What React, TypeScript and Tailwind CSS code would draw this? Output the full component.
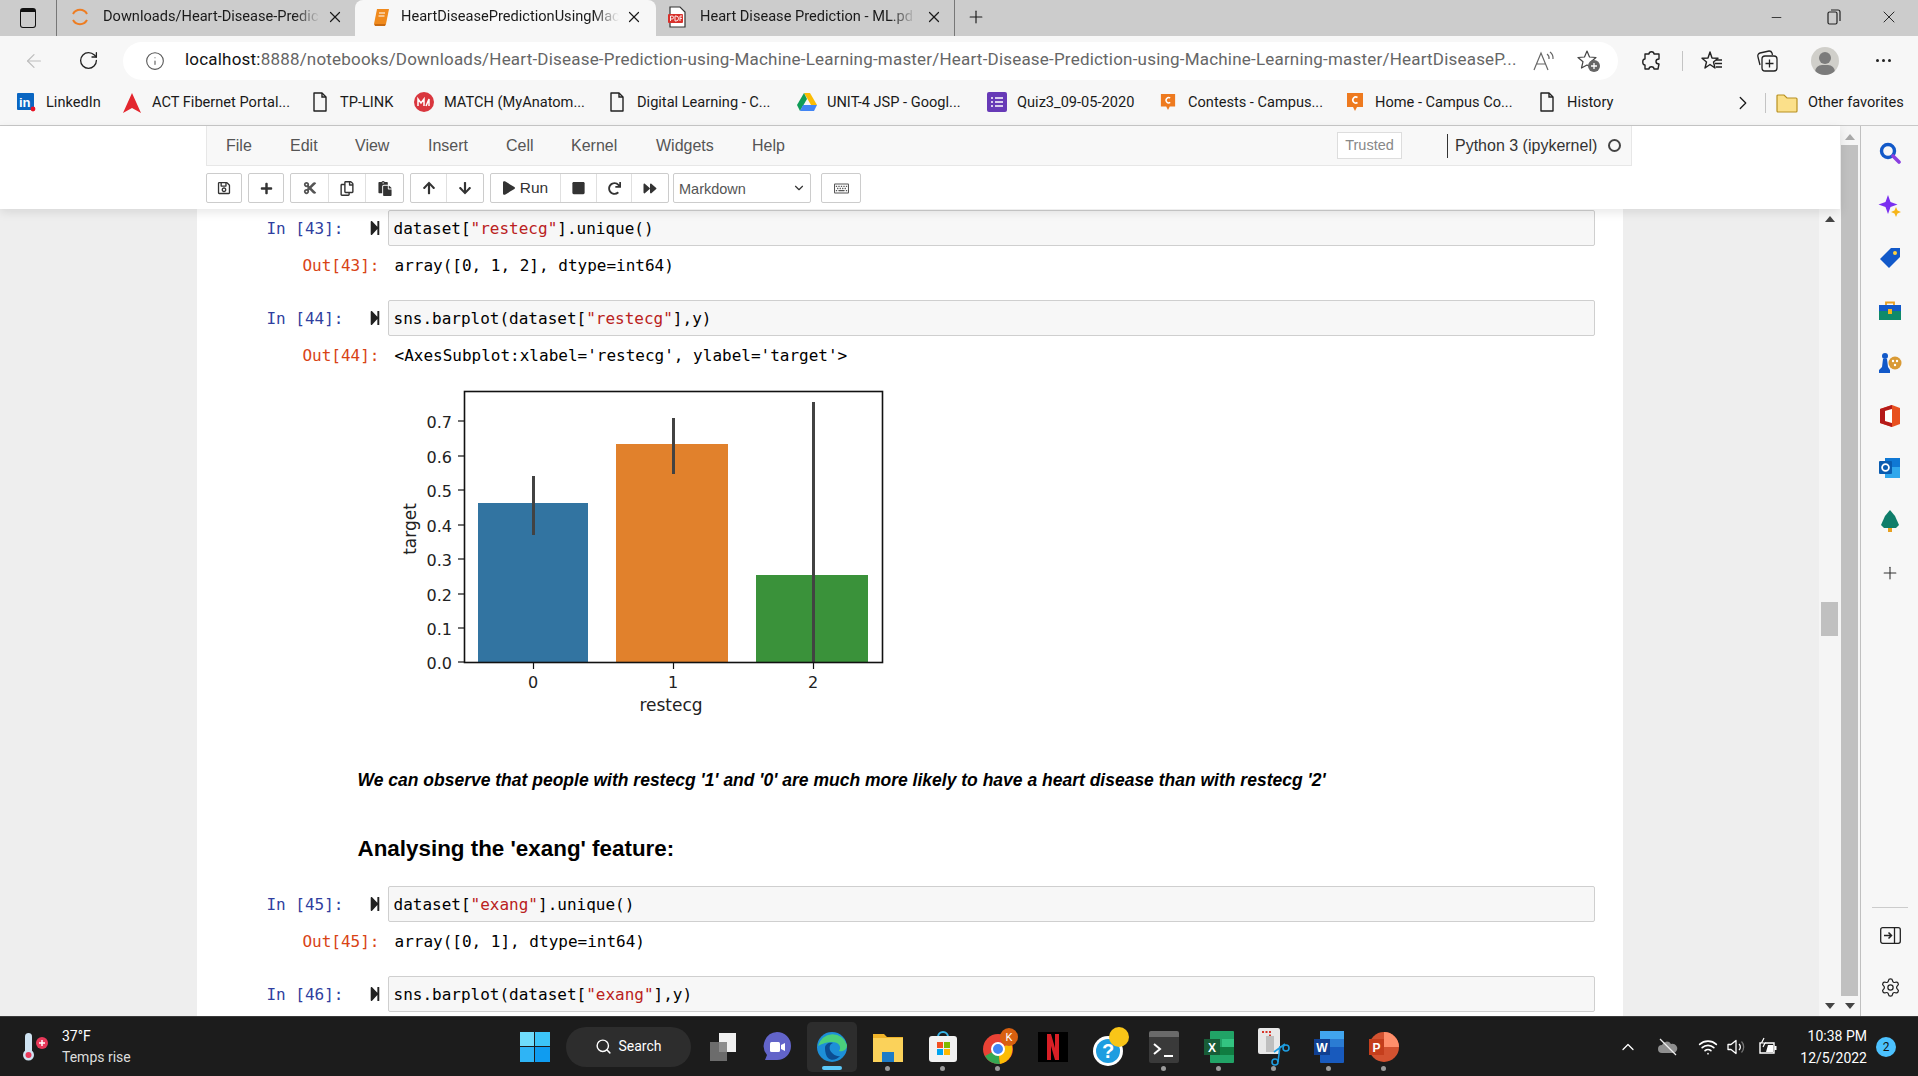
import type { ReactNode } from "react";
import {
	FaArrowDown,
	FaArrowUp,
	FaCut,
	FaForward,
	FaPaste,
	FaPlay,
	FaPlus,
	FaRedo,
	FaRegCopy,
	FaRegKeyboard,
	FaRegSave,
	FaStepForward,
	FaStop,
} from "react-icons/fa";
import {
	ArrowLeft,
	ChevronDown,
	ChevronRight,
	ChevronUp,
	Info,
	Plus,
	RotateCw,
	Search,
	Settings,
	X,
	Minus,
	Wifi,
} from "lucide-react";

const UI = "font-['Roboto','Liberation_Sans',sans-serif]";
const NB = "font-['Liberation_Sans',Arial,sans-serif]";
const MONO = "font-['DejaVu_Sans_Mono',monospace]";

function DocIcon() {
	return (
		<svg width="16" height="20" viewBox="0 0 16 20" fill="none" stroke="#222" strokeWidth="1.4">
			<path d="M2 1h8l4 4v14H2z" strokeLinejoin="round" />
			<path d="M10 1v4h4" />
		</svg>
	);
}

function JupyterSpinner() {
	return (
		<svg width="20" height="22" viewBox="0 0 20 22" fill="none" stroke="#ee7d22" strokeWidth="2">
			<path d="M3 8a8 8 0 0 1 14 0" />
			<path d="M3 14a8 8 0 0 0 14 0" />
		</svg>
	);
}

function NotebookIcon() {
	return (
		<svg width="18" height="20" viewBox="0 0 18 20">
			<path d="M5 2h12l-3 15H2z" fill="#f08a1d" />
			<path d="M2 17l1 2h10l1-2z" fill="#c96a10" />
			<path d="M7 6h6M6.5 9h6" stroke="#fff" strokeWidth="1.2" />
		</svg>
	);
}

function PdfIcon() {
	return (
		<svg width="20" height="22" viewBox="0 0 20 22">
			<path d="M3 1h10l5 5v15H3z" fill="#fff" stroke="#333" strokeWidth="1.2" />
			<rect x="1" y="8" width="15" height="9" rx="1" fill="#d8312c" />
			<path d="M3.5 15v-5h1.6a1.3 1.3 0 0 1 0 3H3.5M8 10v5h1a2 2 0 0 0 0-5zM13 15v-5h2.2M13 12.4h2" stroke="#fff" strokeWidth=".9" fill="none" />
		</svg>
	);
}

function CampusIcon({ size = 18 }: { size?: number }) {
	return (
		<svg width={size} height={size + 2} viewBox="0 0 18 20">
			<path d="M1 1h16v14h-6l-2 4-2-4H1z" fill="#ee7a1f" />
			<path d="M11.5 5.5a3 3 0 1 0 0 5" stroke="#fff" strokeWidth="1.6" fill="none" />
		</svg>
	);
}

const bookmarks: { label: string; icon: ReactNode; width: string }[] = [
	{
		label: "LinkedIn",
		width: "w-[106px]",
		icon: (
			<svg width="20" height="20" viewBox="0 0 20 20">
				<rect x="1" y="1" width="17" height="17" rx="1" fill="#0a66c2" />
				<text x="3" y="15" fill="#fff" fontSize="13" fontWeight="700" fontFamily="Liberation Sans">in</text>
				<circle cx="17" cy="17" r="2.4" fill="#e81123" />
			</svg>
		),
	},
	{
		label: "ACT Fibernet Portal...",
		width: "w-[188px]",
		icon: (
			<svg width="20" height="22" viewBox="0 0 20 22">
				<path d="M10 1l9 20-9-5-9 5z" fill="#e3262e" />
			</svg>
		),
	},
	{ label: "TP-LINK", width: "w-[104px]", icon: <DocIcon /> },
	{
		label: "MATCH (MyAnatom...",
		width: "w-[193px]",
		icon: (
			<svg width="20" height="20" viewBox="0 0 20 20">
				<circle cx="10" cy="10" r="10" fill="#d9363e" />
				<path d="M4 14V7l3 4 3-4v7M12 14l3-7v7" fill="none" stroke="#fff" strokeWidth="1.5" />
			</svg>
		),
	},
	{ label: "Digital Learning - C...", width: "w-[190px]", icon: <DocIcon /> },
	{
		label: "UNIT-4 JSP - Googl...",
		width: "w-[190px]",
		icon: (
			<svg width="20" height="18" viewBox="0 0 20 18">
				<path d="M7 0h6l7 12h-6z" fill="#fbbc04" />
				<path d="M7 0l-7 12 3 6 7-12z" fill="#0f9d58" />
				<path d="M3 18h14l3-6H6z" fill="#4285f4" />
			</svg>
		),
	},
	{
		label: "Quiz3_09-05-2020",
		width: "w-[171px]",
		icon: (
			<svg width="20" height="20" viewBox="0 0 20 20">
				<rect width="20" height="20" rx="2" fill="#673ab7" />
				<path d="M4 6h2M8 6h8M4 10h2M8 10h8M4 14h2M8 14h8" stroke="#fff" strokeWidth="1.6" />
			</svg>
		),
	},
	{ label: "Contests - Campus...", width: "w-[187px]", icon: <CampusIcon size={16} /> },
	{ label: "Home - Campus Co...", width: "w-[192px]", icon: <CampusIcon /> },
	{ label: "History", width: "w-[185px]", icon: <DocIcon /> },
];

const menus = [
	{ label: "File", width: "w-[64px]" },
	{ label: "Edit", width: "w-[65px]" },
	{ label: "View", width: "w-[73px]" },
	{ label: "Insert", width: "w-[78px]" },
	{ label: "Cell", width: "w-[65px]" },
	{ label: "Kernel", width: "w-[85px]" },
	{ label: "Widgets", width: "w-[96px]" },
	{ label: "Help", width: "w-[60px]" },
];

function ToolGroup({ children }: { children: ReactNode }) {
	return <div className="flex h-[30px] rounded-[2px] border border-[#ccc] bg-white divide-x divide-[#e0e0e0] text-[#333] shrink-0">{children}</div>;
}

function ToolBtn({ className, children }: { className: string; children: ReactNode }) {
	return <div className={`flex items-center justify-center ${className}`}>{children}</div>;
}

function CodeCell({ n, children }: { n: number; children: ReactNode }) {
	return (
		<div className={`flex h-[36px] ${MONO} text-[16px]`}>
			<div className="w-[147px] text-right leading-[37px] text-[#303f9f]">In&nbsp;[{n}]:</div>
			<div className="w-[44px] flex items-center pl-[25px] text-[#222]">
				<FaStepForward className="w-[12px] h-[16px]" preserveAspectRatio="none" />
			</div>
			<div className="w-[1207px] rounded-[2px] border border-[#cfcfcf] bg-[#f7f7f7] pl-[5px] leading-[35px] text-black whitespace-pre">
				{children}
			</div>
		</div>
	);
}

function OutRow({ n, children, className }: { n: number; children: ReactNode; className?: string }) {
	return (
		<div className={`flex h-[30px] mt-[4px] ${MONO} text-[16px] leading-[32px] ${className ?? ""}`}>
			<div className="w-[183px] text-right text-[#d84315]">Out[{n}]:</div>
			<div className="pl-[15px] text-black whitespace-pre">{children}</div>
		</div>
	);
}

function Str({ children }: { children: ReactNode }) {
	return <span className="text-[#ba2121]">{children}</span>;
}

function BarChart() {
	const ticks = [
		["0.7", 421],
		["0.6", 456],
		["0.5", 490],
		["0.4", 525],
		["0.3", 559],
		["0.2", 594],
		["0.1", 628],
		["0.0", 662],
	] as const;
	return (
		<svg className="block ml-[190px] w-[520px] h-[360px]" viewBox="387 370 520 360" fontFamily="DejaVu Sans" fill="#222">
			<rect x="478" y="503" width="110" height="159" fill="#3274a1" />
			<rect x="616" y="444" width="112" height="218" fill="#e1812c" />
			<rect x="756" y="575" width="112" height="87" fill="#3a923a" />
			<path d="M533.5 476v59M673.5 418v56M813.5 402v260" stroke="#424242" strokeWidth="3" />
			<rect x="464.5" y="391.5" width="418" height="271" fill="none" stroke="#111" strokeWidth="1.6" />
			{ticks.map(([label, y]) => (
				<g key={label}>
					<path d={`M458 ${y}h7`} stroke="#111" strokeWidth="1.2" />
					<text x="452" y={y + 7} textAnchor="end" fontSize="16">{label}</text>
				</g>
			))}
			{[
				["0", 533.5],
				["1", 673.5],
				["2", 813.5],
			].map(([label, x]) => (
				<g key={label}>
					<path d={`M${x} 662v7`} stroke="#111" strokeWidth="1.2" />
					<text x={Number(x) - 0.5} y="688" textAnchor="middle" fontSize="16">{label}</text>
				</g>
			))}
			<text x="671" y="711" textAnchor="middle" fontSize="17">restecg</text>
			<text transform="translate(416 529) rotate(-90)" textAnchor="middle" fontSize="17">target</text>
		</svg>
	);
}

function SideIcon({ children }: { children: ReactNode }) {
	return <div className="h-[52.5px] flex items-center justify-center">{children}</div>;
}

function Sidebar() {
	return (
		<div className="w-[57px] shrink-0 bg-[#f7f7f7] flex flex-col pl-[1px] pt-[1px]">
			<SideIcon>
				<svg width="22" height="22" viewBox="0 0 22 22" fill="none">
					<circle cx="9" cy="9" r="6.5" stroke="#1259c9" strokeWidth="3.4" />
					<path d="M14 14l6 6" stroke="#8a3fe0" strokeWidth="3.6" strokeLinecap="round" />
				</svg>
			</SideIcon>
			<SideIcon>
				<svg width="24" height="24" viewBox="0 0 24 24">
					<path d="M10 1l2.5 7 7 2.5-7 2.5L10 20l-2.5-7L.5 10.500l7-2.500z" fill="#7a2ff0" />
					<path d="M18 13l1.500 3.500L23 18l-3.500 1.500L18 23l-1.500-3.500L13 18l3.500-1.500z" fill="#f6b519" />
				</svg>
			</SideIcon>
			<SideIcon>
				<svg width="22" height="22" viewBox="0 0 22 22">
					<path d="M12 1h9v9L10 21 1 12z" fill="#1259c9" />
					<circle cx="16" cy="6" r="2" fill="#ffd23f" />
				</svg>
			</SideIcon>
			<SideIcon>
				<svg width="22" height="20" viewBox="0 0 22 20">
					<path d="M7 5V1.500h8V5" fill="none" stroke="#e8a020" strokeWidth="1.8" />
					<rect y="4" width="22" height="6" fill="#1259c9" />
					<rect y="10" width="22" height="9" fill="#0f8a6a" />
					<rect x="9" y="8" width="4" height="5" fill="#f6b519" />
				</svg>
			</SideIcon>
			<SideIcon>
				<svg width="24" height="22" viewBox="0 0 24 22">
					<circle cx="17" cy="11" r="6.500" fill="#d99a35" />
					<circle cx="15" cy="9" r="1.200" fill="#fff" />
					<circle cx="19" cy="9" r="1.200" fill="#fff" />
					<circle cx="17" cy="13" r="1.200" fill="#fff" />
					<circle cx="7" cy="4" r="3" fill="#1259c9" />
					<path d="M5 7h4l1 8 2 3v3H1v-3l3-3z" fill="#1259c9" />
				</svg>
			</SideIcon>
			<SideIcon>
				<svg width="22" height="24" viewBox="0 0 22 24">
					<path d="M1 5l12-4 8 3v16l-8 3-12-4z" fill="#e8501f" />
					<path d="M1 5l12-4v4L6 7v10l7 2v4L1 19z" fill="#b51a1a" />
					<path d="M6 7l7-2v14l-7-2z" fill="#fff" />
				</svg>
			</SideIcon>
			<SideIcon>
				<svg width="22" height="22" viewBox="0 0 22 22">
					<rect x="6" y="1" width="15" height="18" fill="#0f78d4" />
					<path d="M6 10l15 0v11H6z" fill="#30a7ec" />
					<rect y="4" width="13" height="13" rx="1" fill="#0a5cb0" />
					<circle cx="6.500" cy="10.500" r="3.400" fill="none" stroke="#fff" strokeWidth="1.800" />
				</svg>
			</SideIcon>
			<SideIcon>
				<svg width="20" height="22" viewBox="0 0 20 22">
					<rect x="8" y="16" width="4" height="6" fill="#e8a020" />
					<path d="M10 0l5 6 4 9-3 3H4l-3-3 4-9z" fill="#0f7d6a" />
				</svg>
			</SideIcon>
			<SideIcon>
				<Plus className="w-[20px] h-[20px] text-[#333]" strokeWidth={1.3} />
			</SideIcon>
			<div className="mt-auto mx-[10px] border-t border-[#ccc]" />
			<div className="h-[54px] flex items-center justify-center">
				<svg width="21" height="17" viewBox="0 0 21 17" fill="none" stroke="#222" strokeWidth="1.3">
					<rect x=".7" y=".7" width="19.600" height="15.600" rx="2" />
					<path d="M14.500 .7v15.600" />
					<path d="M4 8.500h7M8.500 5.500l3 3-3 3" strokeWidth="1.500" />
				</svg>
			</div>
			<div className="h-[54px] flex items-start pt-[15px] justify-center">
				<Settings className="w-[21px] h-[21px] text-[#222]" strokeWidth={1.4} />
			</div>
		</div>
	);
}

function TaskIcon({ dot, className, children }: { dot?: boolean; className: string; children: ReactNode }) {
	return (
		<div className={`relative h-[60px] flex items-center justify-center shrink-0 ${className}`}>
			{children}
			{dot && <span className="absolute bottom-[6px] left-1/2 -ml-[2.5px] w-[5px] h-[5px] rounded-full bg-[#9a9a9a]" />}
		</div>
	);
}

function Taskbar() {
	return (
		<div className={`h-[60px] shrink-0 bg-[#1c1c1c] border-t border-[#3a3a3a] flex items-center text-white ${UI} relative`}>
			<div className="w-[520px] shrink-0 flex items-center pl-[22px]">
				<svg width="28" height="30" viewBox="0 0 28 30" className="mr-[12px]">
					<rect x="3" y="1" width="7" height="22" rx="3.500" fill="#cfe3f2" />
					<circle cx="6.500" cy="23" r="5.500" fill="#cfe3f2" />
					<circle cx="6.500" cy="23" r="3" fill="#e8395a" />
					<circle cx="20" cy="11" r="6" fill="#e8395a" />
					<path d="M17 11h6M20 8v6" stroke="#fff" strokeWidth="1.500" />
				</svg>
				<div className="text-[14px] leading-[21px]">
					<div>37°F</div>
					<div className="text-[#dcdcdc]">Temps rise</div>
				</div>
			</div>
			<svg width="30" height="30" viewBox="0 0 30 30" className="shrink-0">
				<rect width="14" height="14" fill="#6fdcfb" />
				<rect x="15" width="15" height="14" fill="#3cc4f7" />
				<rect y="15" width="14" height="15" fill="#2fb4f5" />
				<rect x="15" y="15" width="15" height="15" fill="#0f9cf0" />
			</svg>
			<div className="ml-[16px] w-[125px] h-[40px] rounded-full bg-[#2d2d2d] flex items-center justify-center gap-[6px] text-[14px] shrink-0">
				<Search className="w-[17px] h-[17px]" strokeWidth={2} />
				Search
			</div>
			<TaskIcon className="w-[63px]">
				<svg width="28" height="30" viewBox="0 0 28 30">
					<rect x="10" y="1" width="17" height="19" fill="#f0f0f0" />
					<rect x="1" y="10" width="17" height="19" fill="#7a7a7a" fillOpacity=".85" />
				</svg>
			</TaskIcon>
			<TaskIcon className="w-[45px]">
				<svg width="30" height="32" viewBox="0 0 30 32">
					<path d="M15 1a14 14 0 0 1 0 28H3l2-5a14 14 0 0 1 10-23z" fill="#6264c9" />
					<rect x="8" y="11" width="10" height="10" rx="1.500" fill="#fff" />
					<path d="M19 14l4-2v8l-4-2z" fill="#fff" />
				</svg>
			</TaskIcon>
			<div className="ml-[8px] w-[50px] h-[50px] rounded-[5px] bg-[#2d2d2d] relative flex items-center justify-center shrink-0">
				<svg width="32" height="32" viewBox="0 0 32 32">
					<circle cx="16" cy="16" r="15" fill="#1d8fd8" />
					<path d="M2 15A15 15 0 0 1 31 14c0 5-4 7-8 6 3-4 0-9-7-9-7 0-12 3-14 4z" fill="#4bd07c" />
					<path d="M9 17c0-4 4-6 8-5-3 1-4 4-3 7s6 7 10 6c-3 4-9 5-12 2-2-2-3-6-3-10z" fill="#0c4d92" />
				</svg>
				<span className="absolute bottom-[2px] left-1/2 -ml-[10px] w-[20px] h-[4px] rounded-full bg-[#5cc8f8]" />
			</div>
			<TaskIcon dot className="w-[55px] ml-[3px]">
				<svg width="30" height="30" viewBox="0 0 30 30">
					<path d="M0 2h11l3 3h16v25H0z" fill="#f0b429" />
					<rect x="0" y="6" width="30" height="24" fill="#fbd25a" />
					<rect x="9" y="20" width="12" height="10" fill="#1d7cc8" />
				</svg>
			</TaskIcon>
			<TaskIcon dot className="w-[55px]">
				<svg width="28" height="32" viewBox="0 0 28 32">
					<path d="M9 6a5 5 0 0 1 10 0" fill="none" stroke="#37b5e8" strokeWidth="2" />
					<rect y="5" width="28" height="26" rx="3" fill="#f2f2f2" />
					<rect x="8" y="11" width="6" height="6" fill="#f25022" />
					<rect x="15" y="11" width="6" height="6" fill="#7fba00" />
					<rect x="8" y="18" width="6" height="6" fill="#00a4ef" />
					<rect x="15" y="18" width="6" height="6" fill="#ffb900" />
				</svg>
			</TaskIcon>
			<TaskIcon dot className="w-[55px] pl-[6px]">
				<svg width="36" height="38" viewBox="0 0 36 38">
					<circle cx="15" cy="21" r="15" fill="#e94235" />
					<path d="M15 21L2 28a15 15 0 0 0 15 8z" fill="#34a853" />
					<path d="M15 21l2 15a15 15 0 0 0 11-21z" fill="#fbbc04" />
					<circle cx="15" cy="21" r="6" fill="#4285f4" stroke="#fff" strokeWidth="2" />
					<circle cx="26" cy="9" r="9" fill="#d9600f" />
					<text x="26" y="13" textAnchor="middle" fontSize="11" fontFamily="Roboto" fill="#fff">K</text>
				</svg>
			</TaskIcon>
			<TaskIcon className="w-[56px]">
				<div className="w-[30px] h-[30px] bg-black flex items-center justify-center">
					<svg width="12" height="26" viewBox="0 0 12 26">
						<path d="M0 0h4l4 14V0h4v26H8L4 12v14H0z" fill="#d81f26" />
					</svg>
				</div>
			</TaskIcon>
			<TaskIcon className="w-[55px] pl-[4px]">
				<svg width="38" height="40" viewBox="0 0 38 40">
					<circle cx="16" cy="24" r="15" fill="#fff" />
					<circle cx="16" cy="24" r="12" fill="#1e9de0" />
					<text x="16" y="31" textAnchor="middle" fontSize="20" fontWeight="700" fontFamily="Liberation Sans" fill="#fff">?</text>
					<circle cx="27" cy="10" r="10" fill="#f9c518" />
				</svg>
			</TaskIcon>
			<TaskIcon dot className="w-[55px]">
				<div className="w-[30px] h-[32px] rounded-[2px] bg-[#3a3a3a] border-t-[6px] border-[#6a6a6a] flex items-center pl-[4px] gap-[1px]">
					<svg width="22" height="18" viewBox="0 0 22 18" fill="none" stroke="#fff" strokeWidth="2">
						<path d="M1 3l6 5-6 5M11 15h9" />
					</svg>
				</div>
			</TaskIcon>
			<TaskIcon dot className="w-[55px]">
				<svg width="30" height="32" viewBox="0 0 30 32">
					<rect x="6" width="24" height="32" rx="1" fill="#21a366" />
					<rect x="18" y="8" width="12" height="8" fill="#33c481" />
					<rect x="6" y="16" width="24" height="8" fill="#107c41" />
					<rect y="8" width="16" height="16" fill="#185c37" />
					<text x="8" y="21" textAnchor="middle" fontSize="12" fontWeight="700" fontFamily="Liberation Sans" fill="#fff">X</text>
				</svg>
			</TaskIcon>
			<TaskIcon dot className="w-[55px]">
				<svg width="32" height="38" viewBox="0 0 32 38">
					<rect x="0" y="0" width="22" height="26" rx="2" fill="#e8e8e8" />
					<path d="M4 4h8v10" fill="none" stroke="#d8362a" strokeWidth="2" strokeDasharray="2 1.500" />
					<path d="M8 8h8v16H8z" fill="#bfbfbf" />
					<path d="M16 24l11-8M20 34l2-16" stroke="#1e9de0" strokeWidth="1.600" />
					<circle cx="28" cy="20" r="3" fill="none" stroke="#1e9de0" strokeWidth="1.600" />
					<circle cx="17" cy="34" r="3" fill="none" stroke="#1e9de0" strokeWidth="1.600" />
				</svg>
			</TaskIcon>
			<TaskIcon dot className="w-[55px]">
				<svg width="30" height="32" viewBox="0 0 30 32">
					<rect x="6" width="24" height="32" rx="1" fill="#185abd" />
					<rect x="6" width="24" height="8" fill="#41a5ee" />
					<rect x="6" y="8" width="24" height="8" fill="#2b7cd3" />
					<rect y="8" width="16" height="16" fill="#103f91" />
					<text x="8" y="21" textAnchor="middle" fontSize="12" fontWeight="700" fontFamily="Liberation Sans" fill="#fff">W</text>
				</svg>
			</TaskIcon>
			<TaskIcon dot className="w-[55px]">
				<svg width="30" height="32" viewBox="0 0 30 32">
					<circle cx="15" cy="16" r="15" fill="#d35230" />
					<path d="M15 1a15 15 0 0 1 15 15H15z" fill="#ff8f6b" />
					<rect y="8" width="15" height="16" fill="#c43e1c" />
					<text x="7.500" y="21" textAnchor="middle" fontSize="12" fontWeight="700" fontFamily="Liberation Sans" fill="#fff">P</text>
				</svg>
			</TaskIcon>
			<div className="ml-[207px] flex items-center shrink-0">
				<ChevronUp className="w-[20px] h-[20px]" strokeWidth={1.5} />
				<svg width="20" height="20" viewBox="0 0 20 20" className="ml-[20px]">
					<path d="M4 16a4 4 0 0 1 0-8 5 5 0 0 1 9-1 4.500 4.500 0 0 1 3 9z" fill="#8f8f8f" />
					<path d="M2 2l16 16" stroke="#f0f0f0" strokeWidth="1.300" />
				</svg>
				<Wifi className="ml-[20px] w-[20px] h-[20px]" strokeWidth={2} />
				<svg width="20" height="20" viewBox="0 0 20 20" fill="none" stroke="#fff" strokeWidth="1.300" className="ml-[9px]">
					<path d="M1 7.500h3L9 3.500v13l-5-4H1z" strokeLinejoin="round" />
					<path d="M12 7a4 4 0 0 1 0 6" />
					<path d="M14.500 4.500a8 8 0 0 1 0 11" stroke="#777" />
				</svg>
				<svg width="20" height="20" viewBox="0 0 20 20" fill="none" stroke="#fff" strokeWidth="1.400" className="ml-[11px]">
					<path d="M7 6h9v10H2V6h1" />
					<path d="M17.500 9v4" strokeWidth="2" />
					<path d="M10 8h5v7h-7z" fill="#fff" stroke="none" />
					<path d="M6 1L3.500 6H7l-2 4" strokeWidth="1.200" />
				</svg>
				<div className="ml-[13px] w-[76px] text-right text-[14px] leading-[22px] whitespace-nowrap">
					<div>10:38 PM</div>
					<div>12/5/2022</div>
				</div>
				<div className="ml-[9px] w-[20px] h-[20px] rounded-full bg-[#4cc2ff] text-[#111] text-[12px] flex items-center justify-center">2</div>
			</div>
		</div>
	);
}

export default function App() {
	return (
		<div className={`w-[1918px] h-[1076px] overflow-hidden flex flex-col bg-white ${UI}`}>
			{/* tab strip */}
			<div className="h-[36px] bg-[#cccccc] flex items-end shrink-0 text-[14.6px] text-[#1a1a1a]">
				<div className="w-[57px] h-[36px] flex items-center justify-center shrink-0 border-r border-[#777] my-auto">
					<div className="w-[16px] h-[20px] rounded-[3px] border-[1.5px] border-[#111] border-t-[4px]" />
				</div>
				<div className="w-[298px] h-[36px] pb-[2px] flex items-center pl-[13px] shrink-0">
					<JupyterSpinner />
					<span className="ml-[13px] w-[217px] whitespace-nowrap [mask-image:linear-gradient(to_right,black_88%,transparent)]">
						Downloads/Heart-Disease-Predic
					</span>
					<X className="ml-[6px] w-[18px] h-[18px]" strokeWidth={1.6} />
				</div>
				<div className="w-[301px] h-[36px] pb-[2px] rounded-t-[8px] bg-[#f7f7f7] flex items-center pl-[17px] shrink-0">
					<NotebookIcon />
					<span className="ml-[11px] w-[218px] whitespace-nowrap [mask-image:linear-gradient(to_right,black_88%,transparent)]">
						HeartDiseasePredictionUsingMac
					</span>
					<X className="ml-[6px] w-[18px] h-[18px]" strokeWidth={1.6} />
				</div>
				<div className="w-[299px] h-[36px] pb-[2px] flex items-center pl-[11px] shrink-0 border-r border-[#777]">
					<PdfIcon />
					<span className="ml-[13px] w-[216px] whitespace-nowrap [mask-image:linear-gradient(to_right,black_88%,transparent)]">
						Heart Disease Prediction - ML.pd
					</span>
					<X className="ml-[9px] w-[18px] h-[18px]" strokeWidth={1.6} />
				</div>
				<div className="w-[42px] h-[36px] pb-[2px] flex items-center justify-center shrink-0">
					<Plus className="w-[20px] h-[20px]" strokeWidth={1.4} />
				</div>
				<div className="ml-auto h-[36px] pb-[2px] flex items-center shrink-0">
					<div className="w-[57px] flex justify-center"><Minus className="w-[15px] h-[15px]" strokeWidth={1.3} /></div>
					<div className="w-[57px] flex justify-center">
						<svg width="14" height="16" viewBox="0 0 14 16" fill="none" stroke="#222" strokeWidth="1.200">
							<rect x="1" y="3" width="9" height="12" rx="1.500" />
							<path d="M4 1h7a2 2 0 0 1 2 2v9" />
						</svg>
					</div>
					<div className="w-[54px] mr-[2px] flex justify-center"><X className="w-[20px] h-[20px]" strokeWidth={1.1} /></div>
				</div>
			</div>

			{/* address bar */}
			<div className="h-[49px] bg-[#f7f7f7] flex items-center shrink-0 text-[#222]">
				<div className="w-[66px] flex justify-center pl-[1px]"><ArrowLeft className="w-[22px] h-[22px] text-[#bdbdbd]" strokeWidth={1.3} /></div>
				<div className="w-[44px] flex justify-center"><RotateCw className="w-[21px] h-[21px]" strokeWidth={1.5} /></div>
				<div className="ml-[13px] w-[1495px] h-[38px] rounded-full bg-white flex items-center pl-[22px] shrink-0">
					<Info className="w-[20px] h-[20px] text-[#555]" strokeWidth={1.3} />
					<span className="ml-[20px] -mt-[1px] w-[1333px] shrink-0 whitespace-nowrap text-[17px] tracking-[0.2px] text-[#666]">
						<span className="text-[#111]">localhost:</span>8888/notebooks/Downloads/Heart-Disease-Prediction-using-Machine-Learning-master/Heart-Disease-Prediction-using-Machine-Learning-master/HeartDiseaseP...
					</span>
					<svg width="24" height="22" viewBox="0 0 24 22" fill="none" stroke="#666" strokeWidth="1.200" className="ml-[15px]">
						<path d="M1 20L8 3l7 17M3.500 14h9" />
						<path d="M14 4a5 5 0 0 1 2 5M17 2a8 8 0 0 1 3 7" />
					</svg>
					<svg width="24" height="24" viewBox="0 0 24 24" className="ml-[20px]">
						<path d="M10 2l2.500 6 6.500.5-5 4.200 1.500 6.300L10 16l-5.500 3 1.500-6.300-5-4.200 6.500-.5z" fill="none" stroke="#444" strokeWidth="1.200" strokeLinejoin="round" />
						<circle cx="17" cy="17" r="6" fill="#666" />
						<path d="M14 17h6M17 14v6" stroke="#fff" strokeWidth="1.300" />
					</svg>
				</div>
				<svg width="21" height="21" viewBox="0 0 21 21" fill="none" stroke="#222" strokeWidth="1.400" strokeLinejoin="round" className="ml-[23px] shrink-0">
					<path d="M8 4c0-3 5-3 5 0h5v5c-2 0-3 1-3 2.500s1 2.500 3 2.500v0l-1 5h-4c0-3-5-3-5 0H4v-4c-3 0-3-6 0-6V4z" />
				</svg>
				<div className="ml-[20px] w-px h-[20px] bg-[#c4c4c4] shrink-0" />
				<svg width="22" height="21" viewBox="0 0 22 21" fill="none" stroke="#222" strokeWidth="1.400" strokeLinejoin="round" className="ml-[18px] shrink-0">
					<path d="M9 2l2 6 6 .3-4.500 3.700L14 18l-5-3.500L4 18l1.500-6L1 8.300 7 8z" />
					<path d="M15 10h6M14 13.500h7M15 17h6" />
				</svg>
				<svg width="23" height="23" viewBox="0 0 23 23" fill="none" stroke="#222" strokeWidth="1.300" className="ml-[33px] shrink-0">
					<path d="M4 16l-2-8a3 3 0 0 1 2-4l9-2a3 3 0 0 1 3 2l.5 2" />
					<rect x="6" y="7" width="15" height="15" rx="3" />
					<path d="M13.500 10.500v8M9.500 14.500h8" />
				</svg>
				<div className="ml-[32px] w-[28px] h-[28px] rounded-full bg-[#d0cfca] relative overflow-hidden shrink-0">
					<div className="absolute left-[8px] top-[5px] w-[12px] h-[12px] rounded-full bg-[#7b7b7b]" />
					<div className="absolute left-[4px] top-[18px] w-[20px] h-[14px] rounded-full bg-[#7b7b7b]" />
				</div>
				<div className="ml-[37px] flex gap-[3px] shrink-0">
					<span className="w-[3px] h-[3px] rounded-full bg-[#222]" />
					<span className="w-[3px] h-[3px] rounded-full bg-[#222]" />
					<span className="w-[3px] h-[3px] rounded-full bg-[#222]" />
				</div>
			</div>

			{/* bookmarks */}
			<div className="h-[40px] pb-[5px] bg-[#f7f7f7] flex items-center pl-[16px] shrink-0 text-[14.6px] text-[#1a1a1a]">
				{bookmarks.map((b) => (
					<div key={b.label} className={`flex items-center shrink-0 whitespace-nowrap ${b.width}`}>
						<div className="w-[20px] flex justify-center shrink-0">{b.icon}</div>
						<span className="ml-[10px]">{b.label}</span>
					</div>
				))}
				<ChevronRight className="ml-[10px] w-[22px] h-[22px] shrink-0" strokeWidth={1.4} />
				<div className="ml-[11px] w-px h-[20px] bg-[#c4c4c4] shrink-0" />
				<svg width="22" height="20" viewBox="0 0 22 20" className="ml-[10px] shrink-0">
					<path d="M1 3a1 1 0 0 1 1-1h6l3 3h9a1 1 0 0 1 1 1v12a1 1 0 0 1-1 1H2a1 1 0 0 1-1-1z" fill="#fbe08a" stroke="#b89020" strokeWidth="1.200" />
				</svg>
				<span className="ml-[10px] whitespace-nowrap">Other favorites</span>
			</div>

			{/* page */}
			<div className="flex-1 min-h-0 flex border-t border-[#c8c8c8]">
				<div className="flex-1 min-w-0 flex flex-col">
					<div className={`relative z-10 h-[83px] shrink-0 bg-white shadow-[0_3px_10px_rgba(0,0,0,0.10)] pl-[206px] ${NB}`}>
						<div className="w-[1426px] h-[40px] bg-[#f8f8f8] border-b border-x border-[#e7e7e7] flex items-center text-[16px] text-[#555]">
							<div className="flex pl-[19px]">
								{menus.map((m) => (
									<span key={m.label} className={m.width}>{m.label}</span>
								))}
							</div>
							<div className="ml-[525px] w-[65px] h-[27px] border border-[#ddd] bg-white text-[#888] text-[14.5px] flex items-center justify-center">Trusted</div>
							<div className="ml-[45px] h-[24px] border-l border-[#333] pl-[7px] text-[#333] leading-[24px] whitespace-nowrap">Python 3 (ipykernel)</div>
							<div className="ml-[11px] w-[13px] h-[13px] rounded-full border-[2px] border-[#444]" />
						</div>
						<div className="flex items-center mt-[7px] gap-[6px]">
							<ToolGroup><ToolBtn className="w-[34px]"><FaRegSave className="w-[14px] h-[14px]" /></ToolBtn></ToolGroup>
							<ToolGroup><ToolBtn className="w-[34px]"><FaPlus className="w-[13px] h-[13px]" /></ToolBtn></ToolGroup>
							<ToolGroup>
								<ToolBtn className="w-[38px]"><FaCut className="w-[14px] h-[14px] text-[#555]" /></ToolBtn>
								<ToolBtn className="w-[37px]"><FaRegCopy className="w-[14px] h-[15px]" /></ToolBtn>
								<ToolBtn className="w-[37px]"><FaPaste className="w-[14px] h-[15px]" /></ToolBtn>
							</ToolGroup>
							<ToolGroup>
								<ToolBtn className="w-[36px]"><FaArrowUp className="w-[14px] h-[14px]" /></ToolBtn>
								<ToolBtn className="w-[36px]"><FaArrowDown className="w-[14px] h-[14px]" /></ToolBtn>
							</ToolGroup>
							<ToolGroup>
								<ToolBtn className="w-[70px] gap-[5px] text-[15.5px]"><FaPlay className="w-[12px] h-[14px]" />Run</ToolBtn>
								<ToolBtn className="w-[36px]"><FaStop className="w-[13px] h-[14px]" /></ToolBtn>
								<ToolBtn className="w-[35px]"><FaRedo className="w-[13px] h-[13px]" /></ToolBtn>
								<ToolBtn className="w-[36px]"><FaForward className="w-[14px] h-[13px]" /></ToolBtn>
							</ToolGroup>
							<div className="w-[138px] h-[30px] -ml-[2px] rounded-[2px] border border-[#ccc] bg-white flex items-center justify-between pl-[5px] pr-[4px] pt-[3px] text-[14.5px] text-[#555] shrink-0">
								Markdown
								<ChevronDown className="w-[14px] h-[14px] text-[#333] -mt-[3px]" strokeWidth={2} />
							</div>
							<div className="ml-[4px]">
								<ToolGroup><ToolBtn className="w-[38px]"><FaRegKeyboard className="w-[15px] h-[15px] text-[#555]" /></ToolBtn></ToolGroup>
							</div>
						</div>
					</div>

					<div className="flex-1 min-h-0 flex">
						<div className="flex-1 min-w-0 bg-[#eeeeee] flex justify-center overflow-hidden">
							<div className="w-[1426px] h-[807px] bg-white pt-px shrink-0 overflow-hidden">
								<CodeCell n={43}>dataset[<Str>"restecg"</Str>].unique()</CodeCell>
								<OutRow n={43} className="mb-[20px]">array([0, 1, 2], dtype=int64)</OutRow>
								<CodeCell n={44}>sns.barplot(dataset[<Str>"restecg"</Str>],y)</CodeCell>
								<OutRow n={44}>{"<AxesSubplot:xlabel='restecg', ylabel='target'>"}</OutRow>
								<BarChart />
								<p className={`mt-[38px] pl-[161px] text-[17.500px] leading-[24px] font-bold italic text-black ${NB}`}>
									We can observe that people with restecg '1' and '0' are much more likely to have a heart disease than with restecg '2'
								</p>
								<h2 className={`mt-[42px] pl-[161px] text-[22.400px] leading-[30px] font-bold text-black ${NB}`}>
									Analysing the 'exang' feature:
								</h2>
								<div className="mt-[22px]">
									<CodeCell n={45}>dataset[<Str>"exang"</Str>].unique()</CodeCell>
								</div>
								<OutRow n={45} className="mb-[20px]">array([0, 1], dtype=int64)</OutRow>
								<CodeCell n={46}>sns.barplot(dataset[<Str>"exang"</Str>],y)</CodeCell>
							</div>
						</div>
						{/* notebook scrollbar */}
						<div className="w-[21px] shrink-0 bg-[#f5f5f5] flex flex-col items-center py-[7px] text-[#444]">
							<span className="w-0 h-0 border-x-[5px] border-x-transparent border-b-[6px] border-b-[#444]" />
							<span className="mt-[380px] w-[17px] h-[34px] bg-[#c0c0c0]" />
							<span className="mt-auto w-0 h-0 border-x-[5px] border-x-transparent border-t-[6px] border-t-[#444]" />
						</div>
					</div>
				</div>
				{/* window scrollbar */}
				<div className="w-[21px] shrink-0 flex flex-col items-center bg-[#f5f5f5] border-r border-[#c0c0c0] pr-px">
					<span className="mt-[8px] w-0 h-0 border-x-[5px] border-x-transparent border-b-[6px] border-b-[#a8a8a8]" />
					<span className="mt-[5px] w-[17px] flex-1 bg-[#c0c0c0]" />
					<span className="my-[7px] w-0 h-0 border-x-[5px] border-x-transparent border-t-[6px] border-t-[#444]" />
				</div>
				<Sidebar />
			</div>

			<Taskbar />
		</div>
	);
}
